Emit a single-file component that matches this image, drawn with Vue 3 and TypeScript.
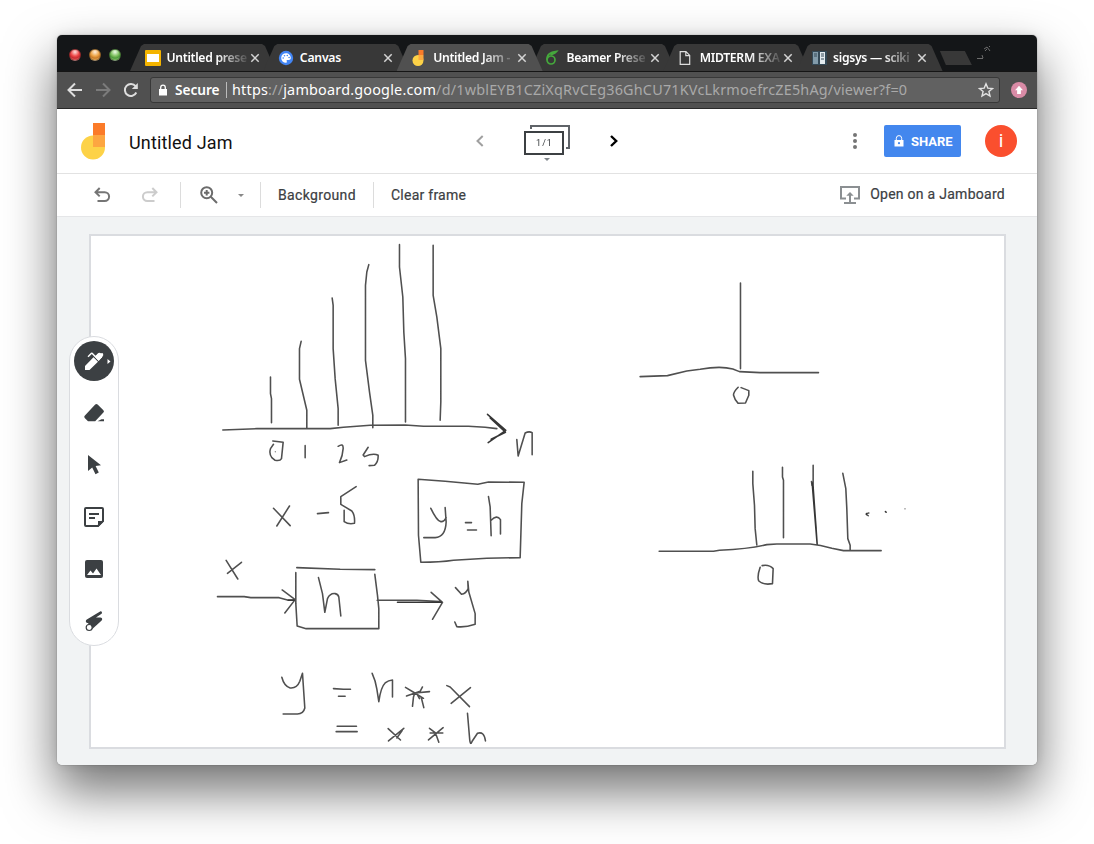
<script setup lang="ts">
interface Tab {
  title: string
  icon: 'slides' | 'palette' | 'jam' | 'overleaf' | 'page' | 'book'
  active?: boolean
}

interface Sketch {
  x: number
  y: number
  thin: string
  bold?: string
}

const tabs: Tab[] = [
  { title: 'Untitled prese', icon: 'slides' },
  { title: 'Canvas', icon: 'palette' },
  { title: 'Untitled Jam -', icon: 'jam', active: true },
  { title: 'Beamer Prese', icon: 'overleaf' },
  { title: 'MIDTERM EXA', icon: 'page' },
  { title: 'sigsys — sciki', icon: 'book' },
]

// Pen strokes, in thirds of a pixel from each sketch's origin.
const sketches: Sketch[] = [
  {
    x: 210,
    y: 235,
    thin:
      'M181 425V475L184 490V562M273 318L268 340V432L290 525V580M366 188L369 210V340L375 430L384 520V570M476 88L470 110L466 150V375L478 470L488 540V577M568 28V95L578 185L581 290L586 370V560M669 30V180L680 245L692 340V500L690 555' +
      'M38 584L140 580H360L400 576L480 570L585 569L640 573H775L825 576L860 580' +
      'M188 617L219 621L214 670Q210 678 195 675L185 667Q176 655 181 640L190 627M285 631V667M384 633Q400 622 399 640Q398 660 388 682L410 674M474 636L459 659L463 664Q490 652 504 660Q505 680 493 690L477 691' +
      'M920 613L924 662L945 593Q957 587 966 592V658',
    bold: 'M832 537L887 585L834 622M840 548L886 591L843 612',
  },
  {
    x: 210,
    y: 470,
    thin:
      'M190 114L240 166M238 107L200 167M322 130L355 127M438 49L392 79V102L425 122Q435 135 433 159Q415 163 402 154V120' +
      'M624 27L705 33L803 42L835 35L942 36L935 100L930 262L830 264L730 270Q690 276 632 276L625 195Z' +
      'M662 114Q680 152 692 154Q702 155 708 142M705 112L708 155Q706 200 675 202H641M766 157H784M772 179H799M835 79L840 110L843 196M843 150Q860 132 871 148V191' +
      'M48 270L83 326M94 276L52 309M22 379H102L122 382H207L232 389H254M216 359L255 388L224 428' +
      'M260 292L390 297L494 298M257 307V400L261 467L288 475H506V415L502 375L494 312' +
      'M325 322L337 370L344 426L352 385Q360 368 375 370Q384 372 386 380L392 437M501 390H620L690 394M663 366L697 396L667 447' +
      'M736 352L754 372Q768 370 774 355L773 333L776 365L795 430V462Q765 472 740 469L734 455',
    bold: 'M562 396H694M234 390H252',
  },
  {
    x: 260,
    y: 630,
    thin:
      'M65 141Q72 168 90 173Q110 175 119 153L127 129L134 233Q130 250 112 251H69M220 175L250 177H271M235 198H255M336 129Q346 150 350 176L356 214Q362 170 375 158Q385 150 397 149V200' +
      'M436 171L464 188L508 184M439 197L480 183L487 170M464 188L460 200L457 228M464 188L483 200L491 232M464 188L490 204M470 190L478 205' +
      'M560 166L570 170L628 229M631 172L573 219M231 288H289M228 304H291M384 295L421 329M431 294L385 332M426 301L410 323M508 294L526 308H548M549 292L505 329M526 308L536 336M510 308H528M622 249L628 320Q630 350 636 333L652 309Q672 302 676 332',
  },
  {
    x: 620,
    y: 270,
    thin:
      'M361 38V295M60 319L142 316L200 302L240 297Q300 286 338 296L358 304L420 307H595M354 351Q340 365 340 374Q344 390 354 399L376 398L386 375V361L363 352' +
      'M398 603V640L403 705L405 775L410 824M487 591V620L490 630V802M579 585V660M574 634L576 645M668 609L677 655L680 715L683 805L690 825V838' +
      'M117 843H280L298 840Q390 836 440 823L470 821H570Q600 824 635 834L670 841H783M420 891Q410 920 416 932Q430 945 457 940L459 895Q447 882 426 886M746 728Q732 731 744 736',
    bold: 'M576 638L591 822M579 660L588 775M579 650L591 820M796 724l2 2M739 730v2',
  },
]
</script>

<template>
  <div class="desktop">
    <main class="window">
      <div class="tabstrip">
        <div class="lights"><i class="red" /><i class="amber" /><i class="green" /></div>
        <div class="tabs">
          <div v-for="t in tabs" :key="t.title" class="tab" :class="{ active: t.active }">
            <svg v-if="t.icon === 'slides'" class="fav" viewBox="0 0 16 16"><rect width="16" height="16" rx="1" fill="#f4b400" /><rect x="2" y="4" width="12" height="8" fill="#fff" /></svg>
            <svg v-else-if="t.icon === 'palette'" class="fav" viewBox="0 0 16 16"><circle cx="8" cy="8" r="7.2" fill="#4285f4" /><path d="M8 3.200a4.800 4.800 0 0 0 0 9.600c1.200 0 1-1 .7-1.500-.4-.8.1-1.300.9-1.300h1.200c1.100 0 2-.9 2-2 0-2.700-2.200-4.800-4.800-4.800z" fill="#fff" /><g fill="#4285f4"><circle cx="5.200" cy="8" r=".8" /><circle cx="6.500" cy="5.700" r=".8" /><circle cx="9.300" cy="5.500" r=".8" /><circle cx="11.100" cy="7.500" r=".8" /></g></svg>
            <svg v-else-if="t.icon === 'jam'" class="fav" viewBox="0 0 16 16"><circle cx="6" cy="10.500" r="5.500" fill="#fdd247" /><path d="M6.500 0h5v5h-5z" fill="#fb7b29" /><path d="M6.500 5h5v5h-5z" fill="#fda83f" /></svg>
            <svg v-else-if="t.icon === 'overleaf'" class="fav" viewBox="0 0 16 16" fill="none" stroke="#45a83c" stroke-width="1.700"><circle cx="6" cy="10" r="4" /><path d="M2.100 10C1.500 5.500 4.500 2 11.800 1.300 10 3.600 8 4 5.500 5" /></svg>
            <svg v-else-if="t.icon === 'page'" class="fav" viewBox="0 0 16 16" fill="none" stroke="#dedede" stroke-width="1.200"><path d="M2.200 1.700h5.800l3.700 3.700v8.900H2.200zM7.800 1.700v3.900h3.900" /></svg>
            <svg v-else class="fav" viewBox="0 0 16 16"><path d="M0 1h15v14H0z" fill="#344957" /><path d="M1 2h5v12H1z" fill="#829baa" /><path d="M8 2h5v12H8z" fill="#e4ebef" /><path d="M2 4h3M2 6h3M9 4h3M9 6h3M9 9h3" stroke="#344957" stroke-width="1" /></svg>
            <span class="tab-title" :class="{ whole: t.title === 'Canvas' }">{{ t.title }}</span>
            <svg class="close" viewBox="0 0 10 10"><path d="M1.300 1.300l7.400 7.400M8.700 1.300L1.300 8.700" /></svg>
          </div>
        </div>
        <div class="newtab" />
        <svg class="full" viewBox="0 0 16 16"><path d="M1 14.500h6M6 11l1 3M8 5l3-2 3 4M9 7l2-2M13 2l1 1" /></svg>
      </div>

      <div class="navbar">
        <svg class="nav back" viewBox="0 0 16 16"><path d="M15 8H2M8 1.500L1.500 8 8 14.500" /></svg>
        <svg class="nav fwd" viewBox="0 0 16 16"><path d="M1 8h13M8 1.500L14.500 8 8 14.500" /></svg>
        <svg class="nav reload" viewBox="0 0 16 16"><path d="M13.300 10.500A6 6 0 1 1 12.600 4.200" /><path class="solid" d="M14.800 1v6H8.800z" /></svg>
        <div class="omnibox">
          <svg class="lock" viewBox="0 0 8 12"><path d="M0 5h8v6.500H0z" /><path class="shackle" d="M1.700 5.500V3.500a2.300 2.300 0 0 1 4.600 0v2" /></svg>
          <span class="secure">Secure</span><i class="bar" />
          <span class="url">https<em>://</em>jamboard.google.com<span class="path">/d/1wblEYB1CZiXqRvCEg36GhCU71KVcLkrmoefrcZE5hAg/viewer?f=0</span></span>
          <svg class="star" viewBox="0 0 16 16"><path d="M8 1.800l1.800 4.300 4.700.4-3.600 3 1.100 4.500L8 11.600 4 14l1.100-4.500-3.600-3 4.700-.4z" /></svg>
        </div>
        <svg class="update" viewBox="0 0 16 16"><circle cx="8" cy="8" r="8" fill="#d98ba6" /><path d="M8 3.800l4 4.500H9.900V12H6.100V8.300H4z" fill="#fff" /></svg>
      </div>

      <header class="header">
        <svg class="logo" viewBox="0 0 24 37"><circle cx="12" cy="24.500" r="12" fill="#fdd247" /><path d="M12 0h12v12H12z" fill="#fb7b29" /><path d="M12 12h12v12H12z" fill="#fda641" /></svg>
        <h1>Untitled Jam</h1>
        <div class="frames">
          <svg class="chev prev" viewBox="0 0 8 12"><path d="M6.700 1L1.500 6l5.200 5" /></svg>
          <div class="framebox">
            <svg viewBox="0 0 46 36"><path class="rear" d="M7 4V1h38v22h-3" /><path class="front" d="M1 7h38v22H1z" /><path d="M20 33h6l-3 3z" fill="#80868b" /></svg>
            <span>1/1</span>
          </div>
          <svg class="chev next" viewBox="0 0 8 12"><path d="M1 1l5.200 5L1 11" /></svg>
        </div>
        <svg class="more" viewBox="0 0 4 16"><circle cx="2" cy="2" r="2" /><circle cx="2" cy="8" r="2" /><circle cx="2" cy="14" r="2" /></svg>
        <button class="share">
          <svg viewBox="0 0 10 12"><path d="M.5 5h9v6.500h-9z" fill="#fff" /><path d="M2.300 5V3.300a2.700 2.700 0 0 1 5.400 0V5" fill="none" stroke="#fff" /><circle cx="5" cy="8.200" r="1.100" fill="#4387ee" /></svg>
          <span>SHARE</span>
        </button>
        <div class="avatar">i</div>
      </header>

      <div class="actions">
        <svg class="undo" viewBox="0 0 18 16"><path d="M3 5.200h8.700a4.400 4.400 0 0 1 0 8.800H4.500M6.700 1L2.500 5.200l4.200 4.200" /></svg>
        <svg class="redo" viewBox="0 0 18 16"><path d="M15 5.200H6.300a4.400 4.400 0 0 0 0 8.800h7.200M11.300 1l4.200 4.200-4.200 4.200" /></svg>
        <i class="sep s1" />
        <svg class="zoom" viewBox="0 0 18 18"><circle cx="6.700" cy="6.700" r="5.500" /><path d="M10.800 10.800L17 17M6.700 4v5.400M4 6.700h5.400" /></svg>
        <i class="caret" />
        <i class="sep s2" />
        <span class="background">Background</span>
        <i class="sep s3" />
        <span class="clear">Clear frame</span>
        <span class="open">
          <svg viewBox="0 0 20 18"><path d="M6 12.500H1V1h18v11.500h-5M10 17V7.500M4 17h12" /><path class="head" d="M6.300 9.700L10 6l3.700 3.700z" /></svg>
          <span>Open on a Jamboard</span>
        </span>
      </div>

      <section class="workspace">
        <div class="board">
          <svg viewBox="91 236 914 511">
            <g v-for="s in sketches" :key="s.x + s.y" :transform="`translate(${s.x + 0.15} ${s.y + 0.3}) scale(.33333)`">
              <path :d="s.thin" class="thin" />
              <path v-if="s.bold" :d="s.bold" class="bold" />
            </g>
            <path class="specks" d="M275.300 451.500v.3M905 508.500v.5" />
          </svg>
        </div>
        <nav class="tools">
          <span class="tool on">
            <svg viewBox="0 0 40 40"><path d="M11 25v4h4.500L24 20.700 19.500 16.200zM20.200 15.400L17.800 13l-3.300 3.300-1-1 3.500-3.500q.8-.8 1.600 0l3.200 3.200 1.700-2.200q2-2 3.300-.3 1.600-1.300 2.300.2.700 1.300-.8 3.100L24.700 20z" fill="#fff" /><path d="M20.500 15.500l4 4.200 3.500-3.500q1-2-.5-3.500-2-1.200-3.800.2z" fill="#fff" /><path d="M33.500 18v5l3-2.500z" fill="#fff" /></svg>
          </span>
          <span class="tool"><svg viewBox="0 .8 40 40"><path d="M10.700 23.500L21.200 12.300q1.200-1.200 2.400 0l5.800 5.700q1.200 1.200 0 2.400L21.200 29H14l-3.300-3.300q-1-1.100 0-2.200zM27.500 27H30v2h-6.500z" /></svg></span>
          <span class="tool"><svg viewBox="0 .9 40 40"><path d="M14 11v16l4.200-3.500 3.300 6.600 3.300-1.700-3.200-6.400 5.400-.8z" /></svg></span>
          <span class="tool"><svg viewBox="0 0 40 40"><path d="M12 11h16q1 0 1 1v12l-5 5H12q-1 0-1-1V12q0-1 1-1z" fill="none" stroke="#3c4043" stroke-width="2" /><path d="M24 30v-6h6zM15 16h10v2H15zM15 20h6v2h-6z" /></svg></span>
          <span class="tool"><svg viewBox="0 0 40 40"><path d="M13 11h14q2 0 2 2v14q0 2-2 2H13q-2 0-2-2V13q0-2 2-2z" /><path d="M13 26l3.500-4.500 2.500 3 3.500-5L27 26z" fill="#fff" /></svg></span>
          <span class="tool"><svg viewBox="0 0 40 40"><path d="M26.500 10.300q1.700-.2 1.500 1.500 0 .8-.8 1.300L22 16.500h4.500q1.700 0 1.700 1.600 0 1-.8 1.600l-9.900 9L13 25l1.500-3h-1q-1.700-.2-1.700-1.700 0-1.200 1-1.800z" /><circle cx="15.200" cy="26.500" r="3" fill="#fff" stroke="#3c4043" stroke-width="1.200" /></svg></span>
        </nav>
      </section>
    </main>
  </div>
</template>

<style>
body { margin: 0; background: #fff; }
</style>

<style scoped>
* { box-sizing: border-box; }
svg { display: block; flex: none; }
.desktop { width: 1094px; height: 844px; padding: 35px 57px 0; overflow: hidden; font-family: Roboto, sans-serif; }
.window { width: 980px; height: 730px; display: flex; flex-direction: column; border-radius: 5px; overflow: hidden; background: #f1f3f4; box-shadow: 0 0 1px rgba(0, 0, 0, .6), 0 0 10px rgba(0, 0, 0, .1), 0 25px 50px 2px rgba(0, 0, 0, .54); }
.tabstrip { height: 36px; display: flex; background: #141618; flex: none; align-items: flex-end; }
.lights { width: 73px; display: flex; gap: 8px; padding: 0 0 10px 12px; }
.lights i { width: 12px; height: 12px; border-radius: 50%; border: 1px solid #0005; }
.red { background: radial-gradient(circle at 50% 20%, #fbd0cd 5%, #ef4848 45%, #c72c31 65%, #ff8d85); }
.amber { background: radial-gradient(circle at 50% 20%, #fde7cb 5%, #eca344 45%, #c87b29 65%, #ffd27a); }
.green { background: radial-gradient(circle at 50% 20%, #e2f6d8 5%, #7cbf5c 45%, #4e9a3c 65%, #b5ea8d); }
.tabs { display: flex; }
.tab { position: relative; z-index: 0; width: 146px; margin-right: -12.700px; height: 27px; padding-left: 15px; display: flex; align-items: center; color: #fff; }
.tab::before { content: ""; position: absolute; z-index: -1; inset: 0; background: #383838; clip-path: polygon(0 100%, 11px 2px, 14px 0, 132px 0, 135px 2px, 146px 100%); }
.tab.active { z-index: 2; }
.tab.active::before { background: #505050; }
.fav { width: 16px; height: 16px; }
.tab-title { width: 80px; margin: 0 3.500px 0 5.500px; white-space: nowrap; font: 600 12.200px/20px "Noto Sans", sans-serif; letter-spacing: -.3px; mask-image: linear-gradient(90deg, #000 62%, transparent 105%); }
.tab-title.whole { mask-image: none; letter-spacing: -.2px; }
.close { width: 10px; height: 10px; fill: none; stroke: #d4d4d4; stroke-width: 1.500; }
.newtab { width: 32px; height: 14px; margin: 0 0 6px 10px; background: #383838; clip-path: polygon(0 0, 25px 0, 32px 100%, 6px 100%); }
.full { width: 16px; height: 16px; margin: 0 0 11px 4px; fill: none; stroke: #777; stroke-width: .9; }
.navbar { height: 38px; flex: none; display: flex; align-items: center; padding: 0 10px; background: #505050; border-top: 1px solid #151515; border-bottom: 1px solid #292929; }
.nav { width: 16px; height: 16px; fill: none; stroke: #dedede; stroke-width: 2; }
.fwd { margin-left: 12px; stroke: #7b7b7b; }
.reload { margin: 0 11px 0 12px; }
.solid { fill: #dedede; stroke: none; }
.omnibox { width: 850px; height: 26px; display: flex; align-items: center; border: 1px solid #383838; border-radius: 3px; background: #616161; color: #fff; font: 14.400px/24px "Noto Sans", sans-serif; }
.lock { width: 8px; height: 12px; margin: 0 8px; fill: #fff; }
.shackle { fill: none; stroke: #fff; stroke-width: 1.300; }
.secure { width: 45px; font-size: 13.700px; font-weight: 600; letter-spacing: -.05px; }
.bar { width: 1px; height: 16px; margin: 0 5px 0 6px; background: #bbb; }
.url { width: 746px; white-space: nowrap; letter-spacing: .2px; }
.url em, .path { color: #a9a9a9; font-style: normal; }
.star { width: 16px; height: 16px; fill: none; stroke: #e2e2e2; stroke-width: 1.400; }
.update { width: 16px; height: 16px; margin-left: 11px; }
.header { height: 65px; flex: none; display: flex; align-items: center; padding-left: 24px; background: #fff; border-bottom: 1px solid #e2e2e2; }
.logo { width: 24px; height: 37px; }
h1 { width: 347px; margin: 3px 0 0 24px; font-size: 18px; font-weight: 400; letter-spacing: .15px; color: #111; }
.frames { display: flex; align-items: center; }
.chev { width: 8px; height: 12px; fill: none; stroke-width: 2; }
.prev { stroke: #a0a0a0; }
.next { stroke: #000; stroke-width: 2.400; }
.framebox { position: relative; margin: 3px 40px 0; }
.framebox svg { width: 46px; height: 36px; }
.framebox span { position: absolute; left: 0; top: 12px; width: 41px; text-align: center; font-size: 9px; line-height: 12px; letter-spacing: 1px; color: #3c4043; will-change: transform; }
.rear, .front { fill: none; stroke: #5f6368; stroke-width: 2; }
.front { fill: #fff; stroke: #3c4043; }
.more { width: 4px; height: 16px; margin-left: 235px; fill: #757575; }
.share { display: flex; align-items: center; gap: 7px; width: 77px; height: 32px; margin-left: 27px; padding: 0 0 0 10px; border: 0; border-radius: 2px; background: #4387ee; color: #fff; font: 700 13px/32px Roboto, sans-serif; }
.share span { padding-top: 1px; }
.share svg { width: 10px; height: 12px; }
.avatar { width: 32px; height: 32px; margin-left: 24px; border-radius: 50%; background: #fa4f2e; color: #fff; font-size: 19px; line-height: 32px; text-align: center; }
.actions { height: 43px; flex: none; display: flex; align-items: center; padding-left: 36px; background: #fff; border-bottom: 1px solid #e5e6e8; color: #3c4043; font-size: 14px; font-weight: 400; -webkit-text-stroke: .2px currentColor; }
.undo, .redo { width: 18px; height: 16px; fill: none; stroke: #757575; stroke-width: 2; }
.redo { margin-left: 30px; stroke: #ccc; }
.sep { width: 1px; height: 26px; background: #dcdcdc; }
.s1 { margin-left: 21px; }
.zoom { width: 18px; height: 18px; margin-left: 19px; fill: none; stroke: #6c6c6c; stroke-width: 2; }
.caret { margin-left: 20px; border: 3px solid transparent; border-top-color: #888; border-bottom: 0; }
.s2 { margin-left: 16px; }
.background { width: 78px; margin: 0 17px; white-space: nowrap; letter-spacing: .35px; }
.clear { margin-left: 17px; letter-spacing: .25px; }
.open { display: flex; align-items: center; gap: 10px; margin: 0 32px 0 auto; letter-spacing: .27px; }
.open span { margin-top: -2px; }
.open svg { width: 20px; height: 18px; fill: none; stroke: #8b8f92; stroke-width: 2; }
.head { fill: #8b8f92; stroke: none; }
.workspace { position: relative; flex: 1; padding: 17px 31px 0 32px; background: #f1f3f4; }
.board { width: 917px; height: 515px; border: 2px solid #dadce0; background: #fff; overflow: hidden; }
.board svg { width: 914px; height: 511px; }
.thin, .bold { fill: none; stroke: #505050; stroke-width: 4.700; stroke-linecap: round; stroke-linejoin: round; }
.bold { stroke: #363636; stroke-width: 4.600; }
.specks { fill: none; stroke: #777; stroke-width: 1.200; stroke-linecap: round; }
.tools { position: absolute; left: 12px; top: 119px; width: 50px; height: 310px; padding: 4px; display: flex; flex-direction: column; gap: 12px; border: 1px solid #dadce0; border-radius: 25px; background: #fff; }
.tool { width: 40px; height: 40px; border-radius: 50%; }
.tool svg { width: 40px; height: 40px; fill: #3c4043; }
.on { background: #3c4043; }
</style>
